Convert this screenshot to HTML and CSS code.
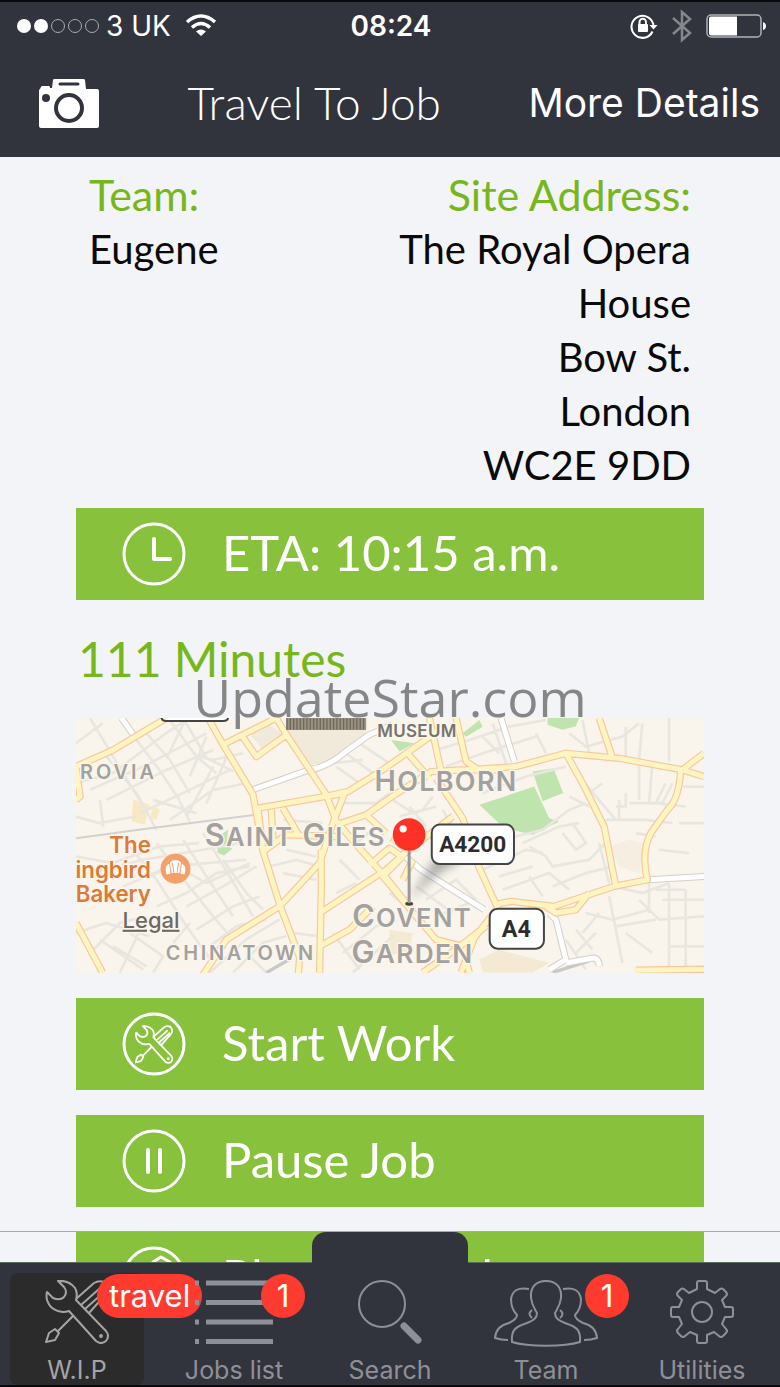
FILE: index.html
```html
<!DOCTYPE html>
<html lang="en">
<head>
    <meta charset="UTF-8">
    <meta name="viewport" content="width=device-width, initial-scale=1.0">
    <title>Travel To Job</title>
    <link rel="stylesheet" href="styles.css">
</head>
<body>
    <header class="header">
        <div class="status-bar">
            <div class="carrier">
                <svg class="signal" width="84" height="16" viewBox="0 0 84 16">
                    <circle cx="8" cy="8" r="7" fill="#fff"/>
                    <circle cx="25" cy="8" r="7" fill="#fff"/>
                    <g fill="none" stroke="#aaacb3">
                        <circle cx="42" cy="8" r="6.5"/>
                        <circle cx="59" cy="8" r="6.5"/>
                        <circle cx="76" cy="8" r="6.5"/>
                    </g>
                </svg>
                <span>3 UK</span>
                <svg class="wifi" width="32" height="24" viewBox="0 0 32 24">
                    <g fill="none" stroke="#fff" stroke-width="3.500">
                        <path d="M2 8Q16-4 30 8"/>
                        <path d="M7 13.500Q16 5.500 25 13.500"/>
                    </g>
                    <path d="M11 17.500Q16 13.500 21 17.500L16 22z" fill="#fff"/>
                </svg>
            </div>
            <span class="time">08:24</span>
            <div class="indicators">
                <svg width="28" height="26" viewBox="0 0 28 26">
                    <path d="M22.500 18.500A11 11 0 1 1 23.500 13" fill="none" stroke="#fff" stroke-width="2"/>
                    <path d="M19.500 12h8l-4 4.500z" fill="#fff"/>
                    <path d="M9.500 12V9a3.200 3.200 0 0 1 6.500 0v3" fill="none" stroke="#fff" stroke-width="2"/>
                    <rect x="8" y="11" width="10" height="8" rx="1" fill="#fff"/>
                </svg>
                <svg width="20" height="34" viewBox="0 0 20 34">
                    <path d="M1 9l17 15-8 7V3l8 7L1 25" fill="none" stroke="#85878e" stroke-width="2.500"/>
                </svg>
                <svg width="60" height="24" viewBox="0 0 60 24">
                    <rect x="1" y="1" width="54" height="22" rx="4" fill="none" stroke="#b0b2b8" stroke-width="1.500"/>
                    <path d="M5 2.500h26v19H5q-2 0-2-2v-15q0-2 2-2z" fill="#fff"/>
                    <path d="M57 8q3 1 3 4t-3 4z" fill="#fff"/>
                </svg>
            </div>
        </div>
        <div class="nav-bar">
            <button class="camera" type="button" aria-label="Camera">
                <svg width="62" height="50" viewBox="0 0 62 50">
                    <path fill="#fff" d="M2 11q1-3 2-3h7q1 0 1 2l2 0 1-8q0-1 2-1h28q2 0 2 1l1 9h11q2 0 2 2v35q0 2-2 2H3q-2 0-2-2V13q0-2 1-2z"/>
                    <path d="M22 6h18" stroke="#32343d" stroke-width="3" stroke-linecap="round"/>
                    <circle cx="8" cy="20" r="4" fill="#32343d"/>
                    <circle cx="31" cy="30" r="13" fill="#fff" stroke="#32343d" stroke-width="4"/>
                </svg>
            </button>
            <h1>Travel To Job</h1>
            <button class="more" type="button">More Details</button>
        </div>
    </header>

    <main class="content">
        <section class="details">
            <div class="team">
                <h2>Team:</h2>
                <p>Eugene</p>
            </div>
            <div class="address">
                <h2>Site Address:</h2>
                <p>The Royal Opera House<br>Bow St.<br>London<br>WC2E 9DD</p>
            </div>
        </section>

        <button class="action" type="button">
            <svg width="64" height="64" viewBox="0 0 64 64" fill="none" stroke="#fff">
                <circle cx="32" cy="32" r="30" stroke-width="3"/>
                <path d="M32 17v20h16" stroke-width="4" stroke-linecap="round" stroke-linejoin="round"/>
            </svg>
            <span>ETA: 10:15 a.m.</span>
        </button>

        <div class="duration">
            <h2>111 Minutes</h2>
            <span class="watermark">UpdateStar.com</span>
        </div>

        <svg class="map" viewBox="18 54 1887 765" role="img" aria-label="Map of Covent Garden">
            <defs>
                <filter id="soft"><feGaussianBlur stdDeviation="14"/></filter>
                <g id="roads">
                    <path d="M18 200L130 150 290 54M18 200l12 90-12 10M415 54l45 80 90 150 30 170 50 160 60 160-10 120M460 134L620 54M515 105l45 65 90-65M620 54l30 50 120 180 30 80 60 70 90 100 80 100M565 325l200-35 70-15 90-55 200-140M640 325l50 85M605 330l5 90M565 325l15 130 70-50 150 5M800 375l90-30 85-60 110-70 90-5 110 0M770 290l55-10-35 90-40 120-120 130-160 100-80 120M755 450l0 120-5 249M750 640l200-130 50-45 150-115M750 740l90-50 70-70M890 345l60 55M900 495l60-50 45 30M18 670l80 149"/>
                    <path d="M1010 155l70 80M1080 54l35 160M1160 54l30 130 40 28M1100 235l80 120 50 150 55 120-70 90-40 104M1190 210l150-10 150-40 160 15 190 35 65 20M1590 54l40 120M1840 210l65-50M1490 160l50 90 65 130 35 180M1835 210q-5 90-40 120l-50 70q-30 60-10 140l-100 20-180 60-130-15-50 10M1000 470l-60 60 100 120 60 70 80 20M1000 370l-30 60M1000 540l30-60M1430 620l30 20 60-10 40-50M1060 819l100-70 90-70M1200 819l-20-70M1700 812l205-3"/>
                </g>
                <path id="minor" d="M155 54l35 50M548 270l170-60q60-10 110-55l70-50 70-30M1295 54l40 130M970 440l85 70 190 120M1440 640l20 20 30 120-50 30M1490 790l80-15q20 0 20 25M1740 540l165-10"/>
            </defs>
            <rect x="18" y="54" width="1887" height="765" fill="#f9f5ed"/>
            <path d="M650 90h240l-10 40-90 50-70 15zM540 100l50-30 50 30-60 50z" fill="#f1e9da"/>
            <path d="M190 300l50 15-15 60-40-10zM250 320l20 10-10 30-20-5z" fill="#f8e8c4"/>
            <path d="M1620 440l60-20 50 10-20 90-60-20z" fill="#f7eee2"/>
            <path d="M960 690l70 10-10 50-60 20zM1230 780l60-30 150 40-50 29h-150z" fill="#f4ead4"/>
            <path d="M1230 315l165-55 45 95 30 10-80 40-85-20zM1390 215l63-10 29 74-62 25zM965 120l70 10-45 25zM1180 100l50-40 10 20-50 30zM1435 54h95l-10 25-40 10-45-15zM445 410l30-20-5 45 18 12-25 20-20-8z" fill="#bfe4ae"/>
            <!-- side streets -->
            <g fill="none" stroke="#e9e6df" stroke-width="8">
                <path d="M18 130l80-60M60 54l90 150 80 130M110 170l90 110 60 110M165 75l100 130 60 90 35 70M230 100l70 80 60 100M300 60l80 110 60 50M340 54l70 120 80 40M18 250l110-30 160-120 70-46M60 270l160-70 190-100M110 300l180-90 140-60M210 340l150-70 120-60M300 360l130-90 100-20M18 350l70 20 110-20M90 300l10 80M250 300l130 40M350 54l-60 120M410 110l-50 120M430 200l-80 150M480 150l-70 160M390 170l40 10 90-20"/>
                <path d="M18 470l110 20 140-50 120-10M60 520l160-40 180-30 110-20M160 560l140-60 230-20M180 440l80 100 90 140 80 110M260 430l90 120 80 100 60 70M340 420l70 110 80 120M400 400l80 130 70 120M460 480l70 100 50 50M230 530l90-30 90 50 130-60M260 620l90-40 90-60 100-20M350 620l110-60 100-60M380 690l110-70 80-30M420 740l80-60 90-20M18 700l90-30 130 40M60 760l90-90 80-20M130 740l100 60M90 720l130 90M180 700l100 70-30 49M230 650l-80 169M310 730l50-60M420 819l110-100 100-60M490 819l90-90 70-20M530 760l60 59"/>
                <path d="M730 220l60-30 90-10M800 200l70 50 90-50M830 160l80 60M870 130l90 60M740 200l120-60M820 310l100 0 40-30M650 450l90 20M600 500l80-20 70 20M640 520l100 20M670 700l80 10M640 360l120 10M810 480l60 60M800 580l60-30M860 430l60-50M820 760l100-80 60-20M850 819l120-110M790 700l80 110"/>
                <path d="M1100 150l100-30 120-40 110-20M1130 200l110-40 160-50M1240 110l50 50M1270 70l40 120M1400 100l30 60M1500 100l50 40 110-30 50-40M1540 60l20 100M1670 80v90M1720 70l-10 110M1800 54v130M1240 280l130-50 120-30M1300 420l120-30 80-60 50-20M1360 430l110-50 60-10M1380 440l50 30 20 30 110-20 60-60M1480 400l40 50 30-20-40-60M1530 230l110 130M1560 280l40-30M1500 290l60 30M1610 360l120 0 80 10M1650 300v60M1640 320h30v-40M1680 310h100l30-60M1710 180v120M1750 190l-10 120M1790 250l-30 60 90 10M1840 260h65M1830 370h75M1770 450l90 10M1700 400l60 10"/>
                <path d="M1240 510l130-60 50 10M1290 530l100-30M1300 570l140-50 60 50M1380 530l40 60M1450 560l100-40 80-20M1590 430l30 120M1620 590l40 200M1550 640l80 20 110-30M1630 560l90 20 80-30M1740 550v90M1800 550v250M1760 570h90M1850 570v240M1780 600h125M1710 600l60 60 135-10M1640 680l120-20M1670 700l80 60M1540 700l50-60M1490 720l60 90M1520 690l50 60M1580 700l-60 60M1350 700l60 40M1800 740h105"/>
                <path d="M970 300l60 40 70-20M990 350l70-20 30-40M1020 320l50 60M1120 330l30 50M1040 560l110 80M1070 600l90-60 60 60M1100 650l100-40M1130 560l100 60M960 580l100 80"/>
            </g>
            <path d="M18 415l200-27 340-43" fill="none" stroke="#d3d1ce" stroke-width="6"/>
            <path d="M590 819l70-40M1450 819l110-35" fill="none" stroke="#c9c8c8" stroke-width="10"/>
            <use href="#minor" fill="none" stroke="#d3d0cc" stroke-width="21"/>
            <use href="#minor" fill="none" stroke="#fff" stroke-width="15"/>
            <use href="#roads" fill="none" stroke="#f8c898" stroke-width="22" stroke-linejoin="round"/>
            <use href="#roads" fill="none" stroke="#fff5c2" stroke-width="15" stroke-linejoin="round"/>

            <path d="M275 40h200v12q0 11-15 11H290q-15 0-15-11z" fill="#fff" stroke="#444" stroke-width="6"/>
            <rect x="650" y="54" width="240" height="36" fill="#9b9283"/>
            <path d="M650 72h240" stroke="#6f675b" stroke-width="34" stroke-dasharray="4 6"/>

            <g class="map-label">
                <text x="923" y="110" font-size="51" letter-spacing="1" fill="#77736d">MUSEUM</text>
                <text x="30" y="237" font-size="60" letter-spacing="9">ROVIA</text>
                <text x="915" y="273" font-size="86" letter-spacing="4">H<tspan font-size="81">OLBORN</tspan></text>
                <text x="405" y="438" font-size="92" letter-spacing="4">S<tspan font-size="77">AINT</tspan> G<tspan font-size="77">ILES</tspan></text>
                <text x="848" y="683" font-size="92" letter-spacing="4">C<tspan font-size="77">OVENT</tspan></text>
                <text x="846" y="789" font-size="92" letter-spacing="4">G<tspan font-size="79">ARDEN</tspan></text>
                <text x="288" y="780" font-size="60" letter-spacing="8">CHINATOWN</text>
            </g>
            <g class="map-place" font-size="67" text-anchor="end">
                <text x="243" y="461">The</text>
                <text x="243" y="534">ingbird</text>
                <text x="243" y="607">Bakery</text>
            </g>
            <circle cx="317" cy="507" r="45" fill="#f4a066"/>
            <path d="M290 524q-8-28 8-32l4 30zM305 520l-5-32q17-14 34 0l-5 32zM332 522l4-30q17 6 8 32z" fill="#fff"/>
            <path d="M308 489l4 30M326 489l-4 30" stroke="#f4a066" stroke-width="3"/>
            <text class="map-legal" x="158" y="684" font-size="66">Legal</text>

            <path d="M1020 600L1100 470l60-20 20 30-70 40z" fill="#555" opacity=".45" filter="url(#soft)"/>
            <g fill="#fff" stroke="#444" stroke-width="6">
                <rect x="1087" y="374" width="247" height="119" rx="24"/>
                <rect x="1261" y="627" width="163" height="120" rx="24"/>
            </g>
            <g class="map-road" text-anchor="middle">
                <text x="1210" y="458" font-size="68">A4200</text>
                <text x="1341" y="711" font-size="70">A4</text>
            </g>
            <ellipse cx="1019" cy="612" rx="12" ry="6" fill="#444"/>
            <path d="M1019 450v160" stroke="#999" stroke-width="9"/>
            <circle cx="1019" cy="404" r="49" fill="#ff3127"/>
            <circle cx="1001" cy="387" r="11" fill="#fff"/>
        </svg>

        <button class="action" type="button">
            <svg class="tools" width="64" height="64" viewBox="0 0 64 64" fill="none" stroke="#fff">
                <circle cx="32" cy="32" r="30" stroke-width="3"/>
                <svg x="13" y="13" width="38" height="39" viewBox="0 0 64 64"><use href="#tools" stroke-width="3"/></svg>
            </svg>
            <span>Start Work</span>
        </button>
        <button class="action" type="button">
            <svg width="64" height="64" viewBox="0 0 64 64" fill="none" stroke="#fff">
                <circle cx="32" cy="32" r="30" stroke-width="3"/>
                <path d="M26 21v22M38 21v22" stroke-width="4" stroke-linecap="round"/>
            </svg>
            <span>Pause Job</span>
        </button>
        <button class="action" type="button">
            <svg width="64" height="64" viewBox="0 0 64 64" fill="none" stroke="#fff">
                <circle cx="32" cy="32" r="30" stroke-width="3"/>
                <path d="M31 16l8-5 9 5-4 20-14 6z" stroke-width="3" stroke-linejoin="round"/>
            </svg>
            <span>Phone Check</span>
        </button>
    </main>

    <nav class="tab-bar">
        <a class="tab active" href="#wip">
            <svg class="tools" width="64" height="64" viewBox="0 0 64 64" fill="none" stroke="#a5a5a5">
                <g id="tools" stroke-linejoin="round" stroke-linecap="round">
                    <path d="M31 19L49 3q5-3 10-1 6 5 2 12L44 33M36 25L54 9M40 29L58 13M28 36L13 51"/>
                    <path d="M1 62l3-9 6-4 4 4-4 7z"/>
                    <path d="M13 1Q24 0 30 8q3 5 1 12L61 51q4 5 0 10-5 4-10 0L24 31Q14 34 6 27 0 20 2 12l6 6q7 3 11-1 4-5 0-10z" fill="currentColor"/>
                    <circle cx="56" cy="56" r="1"/>
                </g>
            </svg>
            <span>W.I.P</span>
            <b class="badge">travel</b>
        </a>
        <a class="tab" href="#jobs">
            <svg width="78" height="64" viewBox="0 0 78 64" stroke="#8f9097" stroke-width="5">
                <path d="M0 3h4M11 3h67M0 22.500h4M11 22.500h67M0 42h4M11 42h67M0 61.500h4M11 61.500h67"/>
            </svg>
            <span>Jobs list</span>
            <b class="badge">1</b>
        </a>
        <a class="tab search" href="#search">
            <svg width="64" height="64" viewBox="0 0 64 64" fill="none" stroke="#8f9097">
                <circle cx="24" cy="24" r="23" stroke-width="2"/>
                <path d="M46 46L60 60" stroke-width="7" stroke-linecap="round"/>
            </svg>
            <span>Search</span>
        </a>
        <a class="tab team-tab" href="#team">
            <svg width="104" height="68" viewBox="0 0 104 68" fill="none" stroke="#8f9097" stroke-width="2">
                <path d="M52 1c10 0 16 6 15 17-1 8-4 11-6 15 0 5 3 7 10 10 12 4 16 7 15 19-16 5-52 5-68 0-1-12 3-15 15-19 7-3 10-5 10-10-2-4-5-7-6-15C36 7 42 1 52 1z"/>
                <path d="M35 9q-16-3-18 10 0 10 6 16 0 4-8 8-13 3-14 15 6 2 13 2M69 9q16-3 18 10 0 10-6 16 0 4 8 8 13 3 14 15-6 2-13 2M38 30q-5 4 0 8M66 30q5 4 0 8"/>
            </svg>
            <span>Team</span>
            <b class="badge">1</b>
        </a>
        <a class="tab" href="#utilities">
            <svg width="64" height="64" viewBox="0 0 64 64" fill="none" stroke="#8f9097" stroke-width="2" stroke-linejoin="round">
                <circle cx="32" cy="32" r="10"/>
                <path d="M27 9V3q0-2 2-2h6q2 0 2 2v6l8 4 5-4q2-1 3 0l3 3q2 2 0 4l-4 4 3 7h6q2 0 2 2v6q0 2-2 2h-6l-3 7 4 5q2 2 0 4l-3 3q-2 2-4 0l-5-4-7 3v6q0 2-2 2h-6q-2 0-2-2v-6l-7-3-5 4q-2 2-4 0l-3-3q-2-2 0-4l4-5-3-7H3q-2 0-2-2v-6q0-2 2-2h6l3-7-4-4q-2-2 0-4l3-3q1-1 3 0l5 4z"/>
            </svg>
            <span>Utilities</span>
        </a>
    </nav>
</body>
</html>
```
FILE: styles.css
```css
* {
    box-sizing: border-box;
}

body {
    margin: 0;
    height: 100vh;
    display: flex;
    flex-direction: column;
    overflow: hidden;
    background: #f2f4f7;
    color: #0a0a0a;
    font-family: Lato, sans-serif;
}

h1, h2, p {
    margin: 0;
    font-weight: 400;
}

button {
    border: none;
    padding: 0;
    background: none;
    color: #fff;
    cursor: pointer;
}

svg {
    display: block;
    flex-shrink: 0;
}

.header {
    flex-shrink: 0;
    background: #32343d;
    color: #fff;
    border-top: 2px solid #0a0a0c;
    font-family: Inter, sans-serif;
}

.status-bar {
    display: grid;
    grid-template-columns: 1fr auto 1fr;
    align-items: center;
    height: 48px;
    padding: 0 14px 0 16px;
    font-size: 28px;
}

.carrier, .indicators {
    display: flex;
    align-items: center;
    gap: 14px;
}

.signal {
    margin-right: -8px;
}

.time {
    font-weight: 600;
}

.indicators {
    justify-content: flex-end;
}

.nav-bar {
    display: flex;
    align-items: center;
    justify-content: space-between;
    height: 107px;
    padding: 0 20px 2px 38px;
}

.nav-bar h1 {
    font-family: Lato, sans-serif;
    font-weight: 300;
    font-size: 46px;
    line-height: 48px;
}

.more {
    font-family: Inter, sans-serif;
    font-size: 39px;
}

.content {
    flex: 1;
    min-height: 0;
    overflow: hidden;
    padding: 10px 76px 0 76px;
}

.details {
    display: flex;
    justify-content: space-between;
    padding: 0 13px;
    margin-bottom: 16px;
    font-size: 40px;
    line-height: 54px;
}

.details h2 {
    font-size: 43px;
    line-height: 55px;
    color: #77b71b;
}

.address {
    width: 304px;
    text-align: right;
}

.action {
    display: flex;
    align-items: center;
    gap: 36px;
    width: 100%;
    height: 92px;
    margin-bottom: 25px;
    padding-left: 46px;
    background: #88c23c;
    font-family: Lato, sans-serif;
    font-size: 49px;
}

.action span {
    padding-bottom: 4px;
}

.action .tools {
    color: #88c23c;
}

.duration {
    position: relative;
    height: 93px;
    padding: 5px 2px;
}

.duration h2 {
    font-size: 48px;
    line-height: 58px;
    color: #77b71b;
}

.watermark {
    position: absolute;
    left: 0;
    right: 0;
    bottom: -10px;
    text-align: center;
    font-family: "Open Sans", sans-serif;
    font-size: 52px;
    line-height: 62px;
    color: #868686;
}

.map {
    width: 100%;
    margin-bottom: 25px;
}

.map-label, .map-place, .map-legal, .map-road {
    font-family: Inter, sans-serif;
    paint-order: stroke;
    stroke: #faf6ee;
    stroke-width: 8px;
}

.map-label {
    font-weight: 600;
    fill: #a3a19e;
}

.map-place {
    font-weight: 600;
    fill: #dd7a36;
}

.map-legal {
    font-weight: 500;
    fill: #6d6962;
    text-decoration: underline;
}

.map-road {
    font-family: Roboto, sans-serif;
    font-weight: 700;
    fill: #2c2c2c;
    stroke: none;
}

.tab-bar {
    position: relative;
    flex-shrink: 0;
    display: grid;
    grid-template-columns: repeat(5, 1fr);
    height: 125px;
    background: #32343d;
    border-top: 1px solid #5b6a58;
    border-bottom: 2px solid #0a0a0c;
    font-family: Inter, sans-serif;
}

/* hairline at the height of the raised tab */
.tab-bar::before {
    content: "";
    position: absolute;
    left: 0;
    right: 0;
    top: -32px;
    border-top: 1px solid #a6a8aa;
}

.tab {
    position: relative;
    display: flex;
    flex-direction: column;
    align-items: center;
    justify-content: space-between;
    padding: 17px 0 0;
    color: #8f9097;
    font-size: 25px;
    line-height: 30px;
    text-decoration: none;
}

.active {
    margin: 10px 12px 0 10px;
    padding: 7px 0 0;
    border-radius: 8px;
    background: #2b2b2c;
    color: #a5a5a5;
}

.tab .tools {
    color: #2b2b2c;
    stroke-width: 2px;
}

.search::before {
    content: "";
    position: absolute;
    left: 0;
    right: 0;
    top: -31px;
    height: 32px;
    border-radius: 14px 14px 0 0;
    background: #32343d;
}

.badge {
    position: absolute;
    right: 7px;
    top: 11px;
    min-width: 44px;
    height: 44px;
    padding: 0 12px;
    border-radius: 22px;
    background: #ff3b30;
    color: #fff;
    font-size: 31px;
    font-weight: 400;
    line-height: 44px;
    text-align: center;
}

.team-tab .badge {
    right: -5px;
}

.active .badge {
    left: 87px;
    right: auto;
    top: 1px;
}
```
